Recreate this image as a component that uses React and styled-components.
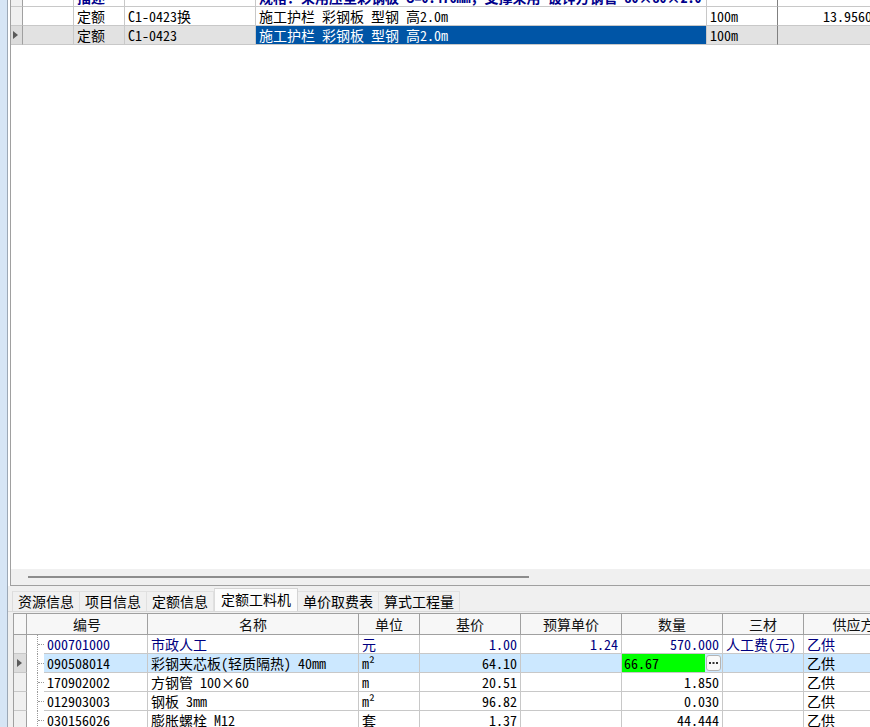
import styled, { createGlobalStyle } from 'styled-components';

const GlobalStyle = createGlobalStyle`
  html, body {
    margin: 0;
    padding: 0;
    overflow: hidden;
    background: #f0f0f0;
  }
  #root { height: 727px; }
`;

const dataFont = `"Noto Sans Mono CJK SC", "Noto Sans CJK SC", "DejaVu Sans Mono", monospace`;
const uiFont = `"Noto Sans CJK SC", "Noto Sans", sans-serif`;

const upperCols = '12px 51px 51px 131px 451px 71px 98px';
const lowerCols = '13px 17px 104px 211px 61px 101px 101px 101px 81px 100px';

const Screen = styled.div`
  display: flex;
  width: 870px;
  height: 727px;
  overflow: hidden;
`;

const SideStrip = styled.div`
  flex: none;
  width: 7px;
  background: #d6e5f5;
  border-right: 1px solid #9ca8b6;
`;

const Main = styled.div`
  flex: 1;
  min-width: 0;
  display: flex;
  flex-direction: column;
  background: #f0f0f0;
`;

const TopPane = styled.div`
  flex: none;
  height: 586px;
  box-sizing: border-box;
  padding-left: 2px;
  background: #fff;
`;

const TopFrame = styled.div`
  height: 100%;
  box-sizing: border-box;
  display: flex;
  flex-direction: column;
  border-left: 1px solid #a0a0a0;
  border-bottom: 1px solid #a0a0a0;
  overflow: hidden;
`;

const GridArea = styled.div`
  flex: 1;
  overflow: hidden;
  background: #fff;
`;

const UpperTable = styled.div`
  margin-top: -12px;
  font-family: ${dataFont};
  font-size: 14px;
`;

const Row = styled.div`
  display: grid;
  grid-template-columns: ${p => p.$cols};
  height: 19px;
  background: ${p => p.$bg || 'transparent'};
`;

const Cell = styled.div`
  box-sizing: border-box;
  height: 100%;
  border-right: 1px solid ${p => p.$line || '#c8c8c8'};
  border-bottom: 1px solid ${p => p.$under || '#c8c8c8'};
  background: ${p => p.$bg || 'transparent'};
  color: ${p => p.$color || '#000'};
  text-align: ${p => p.$align || 'left'};
  font-weight: ${p => (p.$bold ? 700 : 400)};
  padding: ${p => (p.$align === 'right' ? '0 3px 0 2px' : '0 2px 0 3px')};
  line-height: 18px;
  white-space: nowrap;
  overflow: hidden;
`;

const RowHead = styled.div`
  box-sizing: border-box;
  height: 100%;
  display: flex;
  align-items: center;
  padding-left: ${p => p.$pad || 2}px;
  background: ${p => (p.$current ? '#dcdcdc' : '#f0f0f0')};
  border-right: 1px solid #a0a0a0;
  border-bottom: 1px solid #c8c8c8;
`;

const Marker = styled.span`
  width: 0;
  height: 0;
  border-left: 5px solid #5a5a5a;
  border-top: 4px solid transparent;
  border-bottom: 4px solid transparent;
`;

const HScroll = styled.div`
  flex: none;
  height: 16px;
  background: #f0f0f0;
  display: flex;
  align-items: center;
  padding-left: 17px;
`;

const Thumb = styled.div`
  width: 501px;
  height: 2px;
  background: #8c8c8c;
`;

const TabStrip = styled.div`
  flex: none;
  height: 26px;
  box-sizing: border-box;
  display: flex;
  align-items: flex-end;
  padding-left: 4px;
  border-bottom: 1px solid #d9d9d9;
  font-family: ${uiFont};
  font-size: 14px;
`;

const Tab = styled.div`
  box-sizing: border-box;
  height: ${p => (p.$active ? 23 : 20)}px;
  line-height: ${p => (p.$active ? 21 : 19)}px;
  padding: ${p => (p.$active ? '0 6px' : '0 5px')};
  background: ${p => (p.$active ? '#fcfcfc' : '#f0f0f0')};
  border: 1px solid ${p => (p.$active ? '#d4d4d4' : '#e0e0e0')};
  border-bottom: none;
  border-left: ${p => (p.$first || p.$active ? '1px solid #dcdcdc' : 'none')};
  color: #000;
  white-space: nowrap;
`;

const LowerPane = styled.div`
  flex: 1;
  min-height: 0;
  padding: 1px 0 0 5px;
  overflow: hidden;
`;

const LowerGrid = styled.div`
  border-top: 1px solid #a0a0a0;
  border-left: 1px solid #a0a0a0;
  background: #fff;
  font-family: ${dataFont};
  font-size: 14px;
  height: 100%;
`;

const HeadRow = styled(Row)`
  height: 21px;
  background: #f7f7f7;
`;

const HeadCell = styled.div`
  box-sizing: border-box;
  grid-column: span ${p => p.$span || 1};
  border-right: 1px solid #a0a0a0;
  border-bottom: 1px solid #a0a0a0;
  text-align: center;
  line-height: 20px;
  font-family: ${uiFont};
  font-size: 14px;
  color: #111;
  white-space: nowrap;
  overflow: hidden;
`;

const Twig = styled.div`
  position: relative;
  height: 100%;
  &::before {
    content: '';
    position: absolute;
    left: 10px;
    top: 0;
    bottom: 0;
    border-left: 1px dotted #9a9a9a;
  }
  &::after {
    content: '';
    position: absolute;
    left: 11px;
    right: 0;
    top: 9px;
    border-top: 1px dotted #9a9a9a;
  }
`;

const EditCell = styled(Cell)`
  display: flex;
  align-items: center;
  padding: 0;
`;

const EditValue = styled.span`
  flex: 1;
  height: 100%;
  background: #00ff00;
  padding-left: 2px;
  line-height: 18px;
`;

const EllipsisButton = styled.span`
  box-sizing: border-box;
  flex: none;
  display: flex;
  align-items: center;
  justify-content: center;
  width: 15px;
  height: 16px;
  margin: 0 1px;
  border: 1px solid #b4b4b4;
  border-radius: 3px;
  background: #fafafa;
`;

function Dots() {
  return (
    <svg width="9" height="2" viewBox="0 0 9 2">
      <rect x="0" y="0" width="2" height="2" fill="#333" />
      <rect x="3.5" y="0" width="2" height="2" fill="#333" />
      <rect x="7" y="0" width="2" height="2" fill="#333" />
    </svg>
  );
}

const upperRows = [
  { type: '描述', code: '', name: '规格：采用压型彩钢板 δ=0.476mm，支撑采用 镀锌方钢管 80×80×2.0', unit: '', qty: '', desc: true },
  { type: '定额', code: 'C1-0423换', name: '施工护栏 彩钢板 型钢 高2.0m', unit: '100m', qty: '13.9560' },
  { type: '定额', code: 'C1-0423', name: '施工护栏 彩钢板 型钢 高2.0m', unit: '100m', qty: '', current: true },
];

const lowerRows = [
  { code: '000701000', name: '市政人工', unit: '元', base: '1.00', budget: '1.24', qty: '570.000', three: '人工费(元)', supply: '乙供', color: '#000080' },
  { code: '090508014', name: '彩钢夹芯板(轻质隔热) 40mm', unit: 'm²', base: '64.10', budget: '', qty: '66.67', three: '', supply: '乙供', current: true },
  { code: '170902002', name: '方钢管 100×60', unit: 'm', base: '20.51', budget: '', qty: '1.850', three: '', supply: '乙供' },
  { code: '012903003', name: '钢板 3mm', unit: 'm²', base: '96.82', budget: '', qty: '0.030', three: '', supply: '乙供' },
  { code: '030156026', name: '膨胀螺栓 M12', unit: '套', base: '1.37', budget: '', qty: '44.444', three: '', supply: '乙供' },
];

const tabs = ['资源信息', '项目信息', '定额信息', '定额工料机', '单价取费表', '算式工程量'];
const headers = ['名称', '单位', '基价', '预算单价', '数量', '三材', '供应方'];

function UpperRow({ row }) {
  const bg = row.current ? '#e2e2e2' : 'transparent';
  const color = row.desc ? '#00008b' : '#000';
  return (
    <Row $cols={upperCols} $bg={bg}>
      <RowHead $current={row.current}>{row.current && <Marker />}</RowHead>
      <Cell />
      <Cell $color={color} $bold={row.desc}>{row.type}</Cell>
      <Cell>{row.code}</Cell>
      <Cell $color={row.current ? '#fff' : color} $bold={row.desc} $bg={row.current ? '#0055a6' : undefined}>
        {row.name}
      </Cell>
      <Cell $line="#808080">{row.unit}</Cell>
      <Cell $align="right">{row.qty}</Cell>
    </Row>
  );
}

function LowerRow({ row }) {
  const bg = row.current ? '#cce8ff' : undefined;
  const color = row.color || '#000';
  return (
    <Row $cols={lowerCols}>
      <RowHead $pad={3} $current={row.current}>{row.current && <Marker />}</RowHead>
      <Twig />
      <Cell $bg={bg} $color={color}>{row.code}</Cell>
      <Cell $bg={bg} $color={color}>{row.name}</Cell>
      <Cell $bg={bg} $color={color}>{row.unit}</Cell>
      <Cell $bg={bg} $color={color} $align="right">{row.base}</Cell>
      <Cell $bg={bg} $color={color} $align="right">{row.budget}</Cell>
      {row.current ? (
        <EditCell $bg={bg}>
          <EditValue>{row.qty}</EditValue>
          <EllipsisButton>
            <Dots />
          </EllipsisButton>
        </EditCell>
      ) : (
        <Cell $bg={bg} $color={color} $align="right">{row.qty}</Cell>
      )}
      <Cell $bg={bg} $color={color}>{row.three}</Cell>
      <Cell $bg={bg} $color={color}>{row.supply}</Cell>
    </Row>
  );
}

export default function App() {
  return (
    <>
      <GlobalStyle />
      <Screen>
        <SideStrip />
        <Main>
          <TopPane>
            <TopFrame>
              <GridArea>
                <UpperTable>
                  {upperRows.map((row, i) => (
                    <UpperRow key={i} row={row} />
                  ))}
                </UpperTable>
              </GridArea>
              <HScroll>
                <Thumb />
              </HScroll>
            </TopFrame>
          </TopPane>
          <TabStrip>
            {tabs.map((t, i) => (
              <Tab key={t} $first={i === 0} $active={t === '定额工料机'}>
                {t}
              </Tab>
            ))}
          </TabStrip>
          <LowerPane>
            <LowerGrid>
              <HeadRow $cols={lowerCols}>
                <HeadCell />
                <HeadCell $span={2}>编号</HeadCell>
                {headers.map(h => (
                  <HeadCell key={h}>{h}</HeadCell>
                ))}
              </HeadRow>
              {lowerRows.map(row => (
                <LowerRow key={row.code} row={row} />
              ))}
            </LowerGrid>
          </LowerPane>
        </Main>
      </Screen>
    </>
  );
}
